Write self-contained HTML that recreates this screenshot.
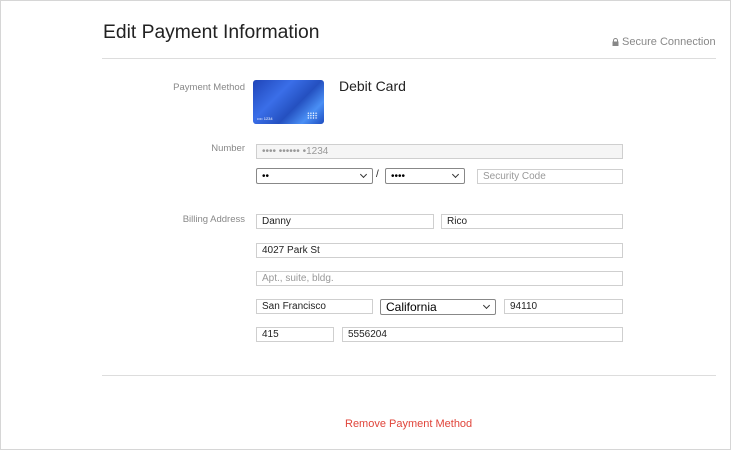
<!DOCTYPE html>
<html><head><meta charset="utf-8"><style>
*{box-sizing:border-box;margin:0;padding:0}
body{width:731px;height:450px;background:#fff;font-family:"Liberation Sans",Arial,sans-serif;position:relative;overflow:hidden}
.frame{position:absolute;left:0;top:0;width:731px;height:450px;border:1px solid #d6d6d6}
.a{position:absolute}
.lbl{position:absolute;right:486px;font-size:9.5px;color:#888;text-align:right}
.in{position:absolute;height:15px;border:1px solid #cfcfcf;font-size:10px;color:#222;padding-left:5px;line-height:14px;background:#fff}
.ph{color:#999}
.sel{position:absolute;height:16px;border:1px solid #888;border-radius:2px;font-size:10px;padding-left:5px;line-height:15px;background:#fff}
.sel:after{content:"";position:absolute;right:6px;top:3px;width:4px;height:4px;border-right:1px solid #333;border-bottom:1px solid #333;transform:rotate(45deg)}
.hr{position:absolute;left:102px;width:614px;height:1px;background:#ddd}
</style></head><body>
<div class="frame"></div>
<div class="a" style="left:103px;top:22px;font-size:19.3px;color:#222">Edit Payment Information</div>
<div class="a" style="left:612px;top:36px;font-size:11px;color:#888">
<svg width="7" height="8" viewBox="0 0 7 8" style="vertical-align:-1px"><path d="M1.5 3.5V2.5a2 2 0 0 1 4 0v1" fill="none" stroke="#888" stroke-width="1"/><rect x="0.5" y="3.5" width="6" height="4.5" fill="#888"/></svg> Secure Connection</div>
<div class="hr" style="top:58px"></div>
<div class="lbl" style="top:82px">Payment Method</div>
<div class="a" style="left:253px;top:80px;width:71px;height:44px;border-radius:3px;background:linear-gradient(135deg,#1f45b8 0%,#3a6ee8 35%,#2450c0 60%,#4a8ff5 80%,#1d4cc0 100%);overflow:hidden">
<div class="a" style="left:4px;top:36px;font-size:4px;color:#fff">•••• 1234</div>
<div class="a" style="left:54px;top:32px;width:11px;height:7px;background:radial-gradient(circle,#fff 0.6px,transparent 0.8px) 0 0/2.6px 2.4px"></div>
</div>
<div class="a" style="left:339px;top:78px;font-size:14px;color:#222">Debit Card</div>
<div class="lbl" style="top:143px">Number</div>
<div class="in ph" style="left:256px;top:144px;width:367px;background:#f5f5f5">•••• •••••• •1234</div>
<div class="sel" style="left:256px;top:168px;width:117px">••</div>
<div class="a" style="left:376px;top:169px;font-size:10px;color:#222">/</div>
<div class="sel" style="left:385px;top:168px;width:80px">••••</div>
<div class="in ph" style="left:477px;top:169px;width:146px">Security Code</div>
<div class="lbl" style="top:214px">Billing Address</div>
<div class="in" style="left:256px;top:214px;width:178px">Danny</div>
<div class="in" style="left:441px;top:214px;width:182px">Rico</div>
<div class="in" style="left:256px;top:243px;width:367px">4027 Park St</div>
<div class="in ph" style="left:256px;top:271px;width:367px">Apt., suite, bldg.</div>
<div class="in" style="left:256px;top:299px;width:117px">San Francisco</div>
<div class="sel" style="left:380px;top:299px;width:116px;font-size:12px">California</div>
<div class="in" style="left:504px;top:299px;width:119px">94110</div>
<div class="in" style="left:256px;top:327px;width:78px">415</div>
<div class="in" style="left:342px;top:327px;width:281px">5556204</div>
<div class="hr" style="top:375px"></div>
<div class="a" style="left:345px;top:418px;font-size:11px;color:#e0443a">Remove Payment Method</div>
</body></html>
